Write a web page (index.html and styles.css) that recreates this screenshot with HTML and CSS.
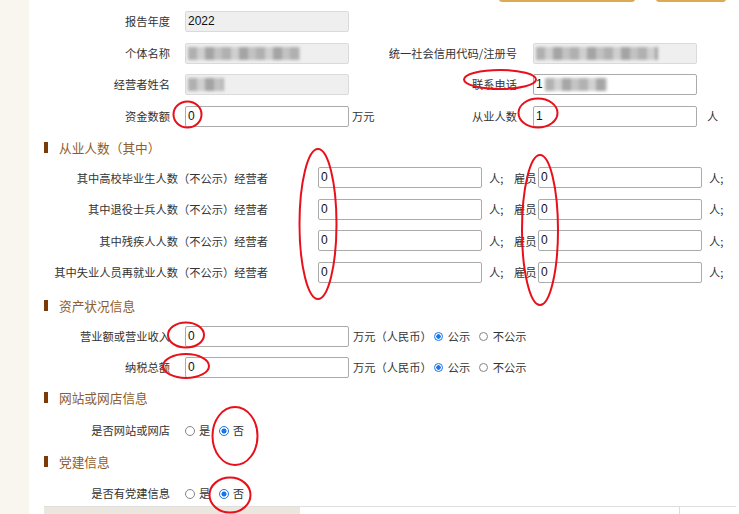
FILE: index.html
```html
<!DOCTYPE html>
<html lang="zh-CN">
<head>
<meta charset="utf-8">
<title>年报填写</title>
<link rel="stylesheet" href="styles.css">
</head>
<body>
<div class="side"></div>
<div class="main">
  <div class="toolbar">
    <div class="tbtn wide"></div>
    <div class="tbtn"></div>
  </div>

  <div class="block top">
    <div class="row">
      <span class="lbl">报告年度</span>
      <div class="field ro">2022</div>
    </div>
    <div class="row">
      <span class="lbl">个体名称</span>
      <div class="field ro"><span class="blur bw1"></span></div>
      <div class="mid"><span></span><span class="rlbl">统一社会信用代码/注册号</span></div>
      <div class="field ro"><span class="blur bw2"></span></div>
    </div>
    <div class="row">
      <span class="lbl">经营者姓名</span>
      <div class="field ro"><span class="blur bw3"></span></div>
      <div class="mid"><span></span><span class="rlbl">联系电话</span></div>
      <div class="field">1<span class="blur bw4"></span></div>
    </div>
    <div class="row">
      <span class="lbl">资金数额</span>
      <div class="field">0</div>
      <div class="mid"><span class="unit">万元</span><span class="rlbl">从业人数</span></div>
      <div class="field">1</div>
      <span class="unit-r">人</span>
    </div>
  </div>

  <div class="sec s1"><span class="bar"></span><span class="sec-t">从业人数（其中）</span></div>
  <div class="block sub">
    <div class="srow">
      <span class="slbl">其中高校毕业生人数（不公示）经营者</span>
      <div class="field">0</div><span class="u1">人;</span><span class="emp">雇员</span><div class="field">0</div><span class="u2">人;</span>
    </div>
    <div class="srow">
      <span class="slbl">其中退役士兵人数（不公示）经营者</span>
      <div class="field">0</div><span class="u1">人;</span><span class="emp">雇员</span><div class="field">0</div><span class="u2">人;</span>
    </div>
    <div class="srow">
      <span class="slbl">其中残疾人人数（不公示）经营者</span>
      <div class="field">0</div><span class="u1">人;</span><span class="emp">雇员</span><div class="field">0</div><span class="u2">人;</span>
    </div>
    <div class="srow">
      <span class="slbl">其中失业人员再就业人数（不公示）经营者</span>
      <div class="field">0</div><span class="u1">人;</span><span class="emp">雇员</span><div class="field">0</div><span class="u2">人;</span>
    </div>
  </div>

  <div class="sec s2"><span class="bar"></span><span class="sec-t">资产状况信息</span></div>
  <div class="block asset">
    <div class="row">
      <span class="lbl">营业额或营业收入</span>
      <div class="field">0</div>
      <span class="cny">万元（人民币）</span>
      <span class="radio on r-first"></span><span class="rt">公示</span>
      <span class="radio r-next"></span><span class="rt">不公示</span>
    </div>
    <div class="row">
      <span class="lbl">纳税总额</span>
      <div class="field">0</div>
      <span class="cny">万元（人民币）</span>
      <span class="radio on r-first"></span><span class="rt">公示</span>
      <span class="radio r-next"></span><span class="rt">不公示</span>
    </div>
  </div>

  <div class="sec s3"><span class="bar"></span><span class="sec-t">网站或网店信息</span></div>
  <div class="row rrow r3">
    <span class="lbl">是否网站或网店</span>
    <span class="radio big"></span><span class="rt">是</span>
    <span class="radio big on r-next"></span><span class="rt">否</span>
  </div>

  <div class="sec s4"><span class="bar"></span><span class="sec-t">党建信息</span></div>
  <div class="row rrow r4">
    <span class="lbl">是否有党建信息</span>
    <span class="radio big"></span><span class="rt">是</span>
    <span class="radio big on r-next"></span><span class="rt">否</span>
  </div>

  <div class="tbl">
    <div class="th c1"></div>
    <div class="th c2"></div>
    <div class="th c3"></div>
  </div>
</div>

<svg class="marks" width="739" height="514" viewBox="0 0 739 514" aria-hidden="true">
  <g fill="none" stroke="#e8101a" stroke-width="2">
    <ellipse cx="187.5" cy="114.5" rx="14" ry="13"/>
    <ellipse cx="500" cy="79.5" rx="36" ry="9.5"/>
    <ellipse cx="538" cy="113" rx="19.5" ry="14.5"/>
    <ellipse cx="318" cy="224" rx="18.5" ry="75"/>
    <ellipse cx="540" cy="230" rx="18" ry="75"/>
    <ellipse cx="186" cy="335" rx="18" ry="12.5"/>
    <ellipse cx="186" cy="366" rx="23" ry="12"/>
    <ellipse cx="235" cy="436" rx="22.5" ry="29"/>
    <ellipse cx="230" cy="495" rx="20.5" ry="17.5"/>
  </g>
</svg>
</body>
</html>
```

FILE: styles.css
```css
html, body {
  margin: 0;
  padding: 0;
}
body {
  position: relative;
  width: 739px;
  height: 514px;
  overflow: hidden;
  display: flex;
  background: #fff;
  color: #333;
  font-family: "Noto Sans CJK SC", "Noto Sans", sans-serif;
  font-size: 11.25px;
}
.side {
  width: 29px;
  flex-shrink: 0;
  background: #f9f6ef;
}
.main {
  flex: 1;
  display: flex;
  flex-direction: column;
}

/* top buttons scrolled out of view */
.toolbar {
  height: 2px;
  display: flex;
  justify-content: flex-end;
  align-items: flex-end;
  gap: 21px;
  padding-right: 13px;
}
.tbtn {
  flex-shrink: 0;
  width: 70px;
  height: 24px;
  box-sizing: border-box;
  border: 2px solid #dcaa55;
  border-radius: 3px;
  background: #fff;
}
.tbtn.wide { width: 136px; }

/* generic row */
.row {
  display: flex;
  align-items: center;
  height: 21px;
  line-height: 21px;
  white-space: nowrap;
}
.lbl {
  width: 141px;
  text-align: right;
  margin-right: 15px;
  flex-shrink: 0;
}
.field {
  box-sizing: border-box;
  width: 164px;
  height: 21px;
  flex-shrink: 0;
  border: 1px solid #ababab;
  border-radius: 2px;
  padding-left: 2px;
  background: #fff;
  font-family: "Liberation Sans", "Noto Sans CJK SC", sans-serif;
  font-size: 12px;
  line-height: 19px;
  color: #111;
  display: flex;
  align-items: center;
  overflow: hidden;
}
.field.ro {
  background: #efefef;
  border-color: #dadada;
}
.blur {
  display: inline-block;
  height: 13px;
  filter: blur(1.8px);
  background: repeating-linear-gradient(90deg, #a5a5a5 0 9px, #c9c9c9 9px 17px, #979797 17px 26px, #bababa 26px 34px);
  opacity: .85;
}
.bw1 { width: 112px; }
.bw2 { width: 122px; }
.bw3 { width: 36px; }
.bw4 { width: 62px; margin-left: 2px; }

.mid {
  width: 184px;
  box-sizing: border-box;
  padding-left: 3px;
  padding-right: 16px;
  flex-shrink: 0;
  display: flex;
  justify-content: space-between;
}
.unit-r { padding-left: 10px; }

.top .row { margin-top: 10.5px; }
.top .row:first-child { margin-top: 9px; }

/* section headings */
.sec {
  display: flex;
  align-items: center;
  height: 20px;
  margin-left: 15px;
}
.bar {
  width: 4px;
  height: 11px;
  background: #7a3b06;
  margin-right: 11px;
}
.sec-t {
  font-size: 12.7px;
  color: #8f5d2c;
}
.s1 { margin-top: 11.5px; }
.s2 { margin-top: 13px; }
.s3 { margin-top: 10px; }
.s4 { margin-top: 10.5px; }

/* sub rows */
.srow {
  display: flex;
  align-items: center;
  height: 21px;
  white-space: nowrap;
  margin-top: 10.5px;
}
.sub .srow:first-child { margin-top: 10px; }
.slbl {
  width: 239px;
  text-align: right;
  margin-right: 50px;
  flex-shrink: 0;
}
.u1 {
  width: 32px;
  box-sizing: border-box;
  padding-left: 7px;
  flex-shrink: 0;
}
.emp {
  width: 24px;
  flex-shrink: 0;
}
.u2 { padding-left: 7px; }

/* asset rows */
.asset .row { margin-top: 10px; }
.asset .row:first-child { margin-top: 11px; }
.cny { padding-left: 4px; }
.radio {
  box-sizing: border-box;
  width: 9px;
  height: 9px;
  border-radius: 50%;
  border: 1px solid #858585;
  background: #fff;
  flex-shrink: 0;
  margin-right: 5px;
}
.radio.big {
  width: 10px;
  height: 10px;
  margin-right: 4px;
}
.radio.on {
  border: 1.5px solid #1b74e8;
  background: radial-gradient(circle, #1b74e8 0 42%, #fff 48%);
}
.r-first { margin-left: 2px; }
.r-next { margin-left: 8.5px; }

.r3 { margin-top: 13.5px; }
.r4 { margin-top: 12.5px; }

/* bottom table header */
.tbl {
  margin-top: 1.5px;
  margin-left: 15px;
  width: 692px;
  height: 30px;
  display: flex;
  border-top: 1px solid #dedede;
  flex-shrink: 0;
}
.th.c1 { width: 256px; background: #ece7de; }
.th.c2 { width: 379px; border-right: 1px solid #dcdcdc; }
.th.c3 { flex: 1; }

.marks {
  position: absolute;
  top: 0;
  left: 0;
  pointer-events: none;
}
```
